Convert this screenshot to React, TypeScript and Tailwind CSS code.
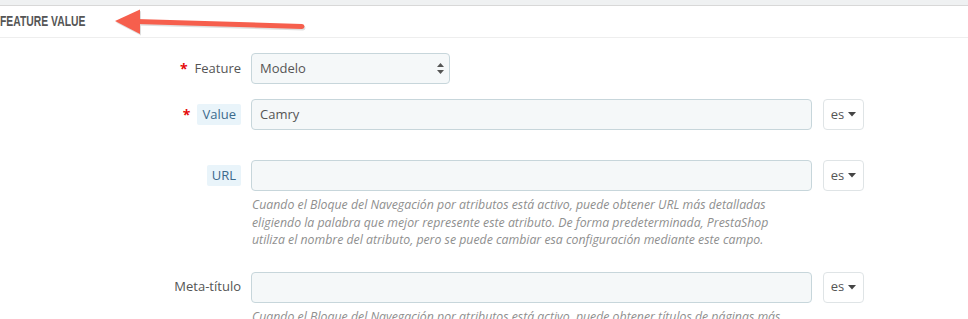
import React from "react";

const font = { fontFamily: "'Open Sans', 'Noto Sans', sans-serif" };

function EsButton() {
  return (
    <div className="ml-[11px] flex h-[31px] w-[41px] items-center justify-center gap-[4px] rounded-[4px] border border-[#dfe4e6] bg-white text-[13px] text-[#555]">
      <span>es</span>
      <svg width="8" height="5" viewBox="0 0 8 5">
        <path d="M0 0 L8 0 L4 4.5 Z" fill="#444" />
      </svg>
    </div>
  );
}

function TextInput({ value }: { value?: string }) {
  return (
    <div className="flex h-[31px] w-[561px] items-center rounded-[4px] border border-[#c7d6db] bg-[#f5f8f9] pl-[8px] text-[13px] text-[#555]">
      {value}
    </div>
  );
}

function Label({ text, required, tip }: { text: string; required?: boolean; tip?: boolean }) {
  return (
    <div className="flex w-[241px] items-center justify-end text-[13px] text-[#555]">
      {required && <span className="mr-[7px] text-[14px] font-bold text-[#e50b0b]">*</span>}
      {tip ? (
        <span className="rounded-[2px] bg-[#e9f4fa] px-[5px] py-[1px] text-[#3b6a8c]">{text}</span>
      ) : (
        <span>{text}</span>
      )}
    </div>
  );
}

function Help({ lines }: { lines: string[] }) {
  return (
    <div className="ml-[252px] mt-[5px] whitespace-nowrap text-[12.3px] italic leading-[17.5px] text-[#8f8f8f]">
      {lines.map((l, i) => (
        <div key={i}>{l}</div>
      ))}
    </div>
  );
}

export default function App() {
  return (
    <div className="relative h-[319px] w-[968px] overflow-hidden bg-white" style={font}>
      <div className="h-[5px] bg-[#eff1f2]" />
      <div className="h-[1px] bg-[#d8d8d8]" />
      <div className="flex h-[32px] items-center border-b border-[#eeeeee] bg-white">
        <span
          className="origin-left scale-x-[0.74] whitespace-nowrap text-[14px] font-bold uppercase text-[#555]"
          style={{ fontFamily: "'Liberation Sans', sans-serif" }}
        >
          Feature Value
        </span>
      </div>

      <svg className="absolute left-0 top-0" width="320" height="40" viewBox="0 0 320 40">
        <g transform="translate(1,1.5)" fill="#000" opacity="0.12">
          <path d="M115 21 L140 9.5 L140 34 Z" />
          <line x1="136" y1="21.5" x2="302" y2="26.5" stroke="#000" strokeWidth="5" strokeLinecap="round" />
        </g>
        <path d="M115 21 L140 9.5 L140 34 Z" fill="#f65f4d" />
        <line x1="136" y1="21.5" x2="302" y2="26.5" stroke="#f65f4d" strokeWidth="5" strokeLinecap="round" />
      </svg>

      <div className="mt-[15px] flex items-center">
        <Label text="Feature" required />
        <div className="ml-[10px] flex h-[31px] w-[199px] items-center justify-between rounded-[4px] border border-[#c7d6db] bg-[#f5f8f9] pl-[8px] pr-[5px] text-[13px] text-[#555]">
          <span>Modelo</span>
          <svg width="7" height="11" viewBox="0 0 7 11">
            <path d="M3.5 0 L7 4 L0 4 Z" fill="#555" />
            <path d="M0 7 L7 7 L3.5 11 Z" fill="#555" />
          </svg>
        </div>
      </div>

      <div className="mt-[15px] flex items-center">
        <Label text="Value" required tip />
        <div className="ml-[10px] flex items-center">
          <TextInput value="Camry" />
          <EsButton />
        </div>
      </div>

      <div className="mt-[30px] flex items-center">
        <Label text="URL" tip />
        <div className="ml-[10px] flex items-center">
          <TextInput />
          <EsButton />
        </div>
      </div>
      <Help
        lines={[
          "Cuando el Bloque del Navegación por atributos está activo, puede obtener URL más detalladas",
          "eligiendo la palabra que mejor represente este atributo. De forma predeterminada, PrestaShop",
          "utiliza el nombre del atributo, pero se puede cambiar esa configuración mediante este campo.",
        ]}
      />

      <div className="mt-[23px] flex items-center">
        <Label text="Meta-título" />
        <div className="ml-[10px] flex items-center">
          <TextInput />
          <EsButton />
        </div>
      </div>
      <Help
        lines={[
          "Cuando el Bloque del Navegación por atributos está activo, puede obtener títulos de páginas más",
        ]}
      />
    </div>
  );
}
